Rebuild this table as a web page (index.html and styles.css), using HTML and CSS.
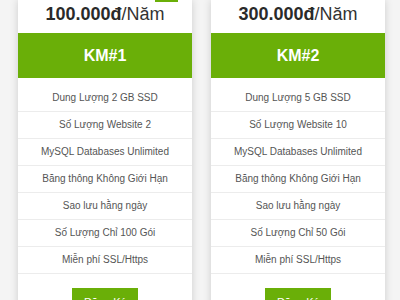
FILE: index.html
```html
<!DOCTYPE html>
<html lang="vi">
<head>
<meta charset="utf-8">
<link rel="stylesheet" href="styles.css">
</head>
<body>
<div class="plans">
  <div class="card">
    <span class="badge"></span>
    <div class="price"><b>100.000đ</b>/Năm</div>
    <div class="head">KM#1</div>
    <ul class="features">
      <li>Dung Lượng 2 GB SSD</li>
      <li>Số Lượng Website 2</li>
      <li>MySQL Databases Unlimited</li>
      <li>Băng thông Không Giới Hạn</li>
      <li>Sao lưu hằng ngày</li>
      <li>Số Lượng Chỉ 100 Gói</li>
      <li>Miễn phí SSL/Https</li>
    </ul>
    <div class="action"><a class="btn">Đăng Ký</a></div>
  </div>
  <div class="card">
    <div class="price"><b>300.000đ</b>/Năm</div>
    <div class="head">KM#2</div>
    <ul class="features">
      <li>Dung Lượng 5 GB SSD</li>
      <li>Số Lượng Website 10</li>
      <li>MySQL Databases Unlimited</li>
      <li>Băng thông Không Giới Hạn</li>
      <li>Sao lưu hằng ngày</li>
      <li>Số Lượng Chỉ 50 Gói</li>
      <li>Miễn phí SSL/Https</li>
    </ul>
    <div class="action"><a class="btn">Đăng Ký</a></div>
  </div>
</div>
</body>
</html>
```
FILE: styles.css
```css
html, body {
  margin: 0;
  padding: 0;
  background: #f4f4f4;
  font-family: "Liberation Sans", Arial, sans-serif;
  overflow: hidden;
}
.plans {
  display: flex;
  gap: 19px;
  padding-left: 18px;
  align-items: flex-start;
}
.card {
  position: relative;
  width: 174px;
  background: #fff;
  box-shadow: 0 0 8px rgba(0, 0, 0, 0.16);
}
.badge {
  position: absolute;
  top: -14px;
  right: 14px;
  width: 23px;
  height: 16px;
  background: #6aaf08;
}
.price {
  height: 33px;
  line-height: 28px;
  text-align: center;
  font-size: 18px;
  color: #333;
}
.price b {
  font-weight: bold;
  color: #2a2a2a;
}
.head {
  height: 45px;
  line-height: 45px;
  background: #6aaf08;
  color: #fff;
  font-weight: bold;
  font-size: 16px;
  text-align: center;
}
.features {
  list-style: none;
  margin: 0;
  padding: 7px 0 0;
}
.features li {
  height: 26px;
  line-height: 26px;
  border-bottom: 1px solid #ececec;
  text-align: center;
  font-size: 10px;
  color: #555;
}
.action {
  padding-top: 14px;
  display: flex;
  justify-content: center;
}
.btn {
  display: block;
  width: 66px;
  height: 28px;
  line-height: 28px;
  background: #6aaf08;
  color: #fff;
  font-size: 11px;
  text-align: center;
}
```
